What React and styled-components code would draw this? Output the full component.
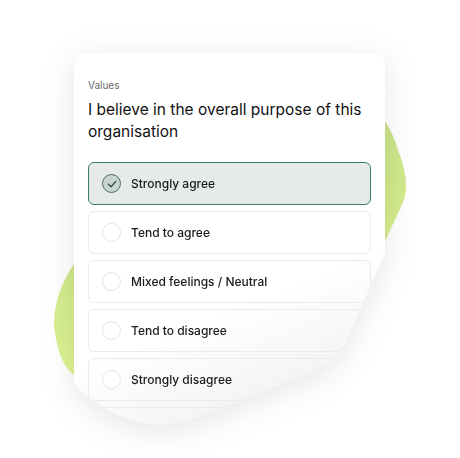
import React from "react"
import styled, { createGlobalStyle } from "styled-components"

const GlobalStyle = createGlobalStyle`
  html, body {
    margin: 0;
    padding: 0;
    background: #ffffff;
  }
  body {
    font-family: Inter, "Noto Sans", "Liberation Sans", sans-serif;
  }
`

const OPTIONS = [
  "Strongly agree",
  "Tend to agree",
  "Mixed feelings / Neutral",
  "Tend to disagree",
  "Strongly disagree",
  "",
]

const CARD_SHAPE =
  "path('M0,14 Q0,0 14,0 H297 Q311,0 311,14 V200 L275,282 Q263,309 240,318 L120,366 Q92,376 64,369 Q24,358 0,330 Z')"

function Blob() {
  return (
    <BlobSvg width="460" height="458" viewBox="0 0 460 458">
      <defs>
        <linearGradient id="blobFill" x1="0" y1="0" x2="0.3" y2="1">
          <stop offset="0" stopColor="#b2ca76" />
          <stop offset="0.45" stopColor="#cce58a" />
          <stop offset="1" stopColor="#e0f793" />
        </linearGradient>
      </defs>
      <path
        d="M300,78 Q380,86 398,150 Q410,180 404,200 L340,340 L320,360 L100,382 Q60,386 54,325 Q54,280 95,238 Z"
        fill="url(#blobFill)"
      />
    </BlobSvg>
  )
}

function Check({ on }) {
  return (
    <Radio $on={on}>
      {on && (
        <svg width="12" height="12" viewBox="0 0 12 12">
          <path
            d="M2.4 6.2 L5 8.7 L9.8 3.6"
            fill="none"
            stroke="#3b5a4c"
            strokeWidth="1.5"
            strokeLinecap="round"
            strokeLinejoin="round"
          />
        </svg>
      )}
    </Radio>
  )
}

export default function App() {
  return (
    <>
      <GlobalStyle />
      <Stage>
        <Blob />
        <CardShadow>
          <Card>
            <Eyebrow>Values</Eyebrow>
            <Question>I believe in the overall purpose of this organisation</Question>
            <OptionList>
              {OPTIONS.map((label, i) => (
                <Option key={i} $selected={i === 0}>
                  <Check on={i === 0} />
                  <OptionLabel>{label}</OptionLabel>
                </Option>
              ))}
            </OptionList>
          </Card>
        </CardShadow>
      </Stage>
    </>
  )
}

const Stage = styled.div`
  position: relative;
  width: 460px;
  height: 458px;
  overflow: hidden;
  background: #ffffff;
  display: flex;
  align-items: flex-start;
  padding: 53px 0 0 74px;
  box-sizing: border-box;
`

const BlobSvg = styled.svg`
  position: absolute;
  left: 0;
  top: 0;
`

const CardShadow = styled.div`
  position: relative;
  filter: drop-shadow(0 6px 16px rgba(0, 0, 0, 0.1));
`

const Card = styled.div`
  width: 311px;
  height: 374px;
  box-sizing: border-box;
  padding: 26px 14px 0;
  clip-path: ${CARD_SHAPE};
  background: linear-gradient(158deg, #ffffff 64%, #ebebeb 100%);
  display: flex;
  flex-direction: column;
`

const Eyebrow = styled.div`
  font-size: 10px;
  line-height: 12px;
  color: #6a6a6a;
`

const Question = styled.h2`
  margin: 8px 0 0;
  font-size: 15.5px;
  line-height: 22px;
  font-weight: 400;
  color: #111111;
`

const OptionList = styled.div`
  margin-top: 19px;
  display: flex;
  flex-direction: column;
  gap: 6px;
`

const Option = styled.div`
  height: 43px;
  flex-shrink: 0;
  box-sizing: border-box;
  display: flex;
  align-items: center;
  gap: 10px;
  padding: 0 13px;
  border-radius: 6px;
  border: 1px solid ${(p) => (p.$selected ? "#3f7d66" : "#ebebeb")};
  background: ${(p) => (p.$selected ? "#e6ebea" : "transparent")};
`

const Radio = styled.span`
  width: 19px;
  height: 19px;
  box-sizing: border-box;
  border-radius: 50%;
  display: flex;
  align-items: center;
  justify-content: center;
  border: ${(p) => (p.$on ? "1.5px solid #4e6d60" : "1px solid #e3e3e3")};
  background: ${(p) => (p.$on ? "#c8d5cf" : "#ffffff")};
`

const OptionLabel = styled.span`
  font-size: 12px;
  font-weight: 500;
  color: #1a1a1a;
`
